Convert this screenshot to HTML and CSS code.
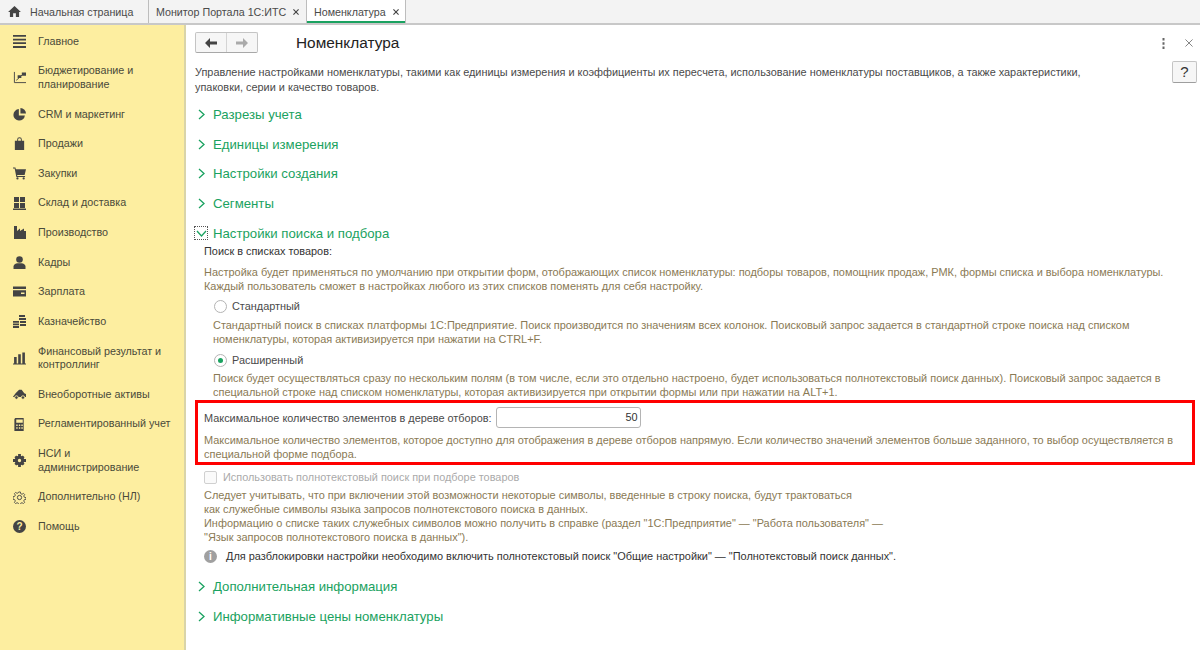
FILE: index.html
```html
<!DOCTYPE html>
<html lang="ru">
<head>
<meta charset="utf-8">
<title>Номенклатура</title>
<link rel="stylesheet" href="styles.css">
</head>
<body>
<header class="tabs">
  <div class="tab tab-home">
    <svg class="home-icon" viewBox="0 0 14 12"><path d="M7 0 0 6.500h2V12h3.500V8h3v4H12V6.500h2z"/></svg>
    <span>Начальная страница</span>
  </div>
  <div class="tab tab-monitor"><span>Монитор Портала 1С:ИТС</span><svg class="tab-x" viewBox="0 0 7 7"><path d="M.5.500l6 6M6.500.500l-6 6"/></svg></div>
  <div class="tab tab-active"><span>Номенклатура</span><svg class="tab-x" viewBox="0 0 7 7"><path d="M.5.500l6 6M6.500.500l-6 6"/></svg></div>
</header>
<div class="main">
  <nav class="side">
    <div class="nav-item"><svg class="ico" viewBox="0 0 12 12"><path d="M0 0h12v1.600H0zM0 3.400h12V5H0zM0 6.800h12v1.600H0zM0 10.200h12V12H0z"/></svg><span>Главное</span></div>
    <div class="nav-item two"><svg class="ico" viewBox="0 0 14 14"><path d="M1.500 1v11.500H14M3.500 10 7 7l3-3" fill="none" stroke="#444" stroke-width="1"/><path d="M5 4.500h4v3H5zM9.500 1.500H14v3.500H9.500z"/></svg><span>Бюджетирование и планирование</span></div>
    <div class="nav-item"><svg class="ico" viewBox="0 0 14 14"><path d="M6.300 1.200A6.200 6.200 0 1 0 12.800 8H6.300z"/><path d="M8 0a6 6 0 0 1 6 6H8z"/></svg><span>CRM и маркетинг</span></div>
    <div class="nav-item"><svg class="ico" viewBox="0 0 12 14"><path d="M1 4h2.500V2.800a2.500 2.500 0 0 1 5 0V4H11v10H1zM4.500 4h3V2.800a1.500 1.500 0 0 0-3 0z" fill-rule="evenodd"/></svg><span>Продажи</span></div>
    <div class="nav-item"><svg class="ico" viewBox="0 0 14 13"><path d="M0 0h2.600l.5 2H14l-1.500 6H4.400l.3 1.200H13v1H3.600L1.800 1H0z"/><circle cx="4.800" cy="11.800" r="1.200"/><circle cx="11.500" cy="11.800" r="1.200"/></svg><span>Закупки</span></div>
    <div class="nav-item"><svg class="ico" viewBox="0 0 13 13"><path d="M1 0h5v5H1zM7 0h5v5H7zM1 6h5v5H1zM7 6h5v5H7zM0 11.600h13V13H0z"/></svg><span>Склад и доставка</span></div>
    <div class="nav-item"><svg class="ico" viewBox="0 0 13 13"><path d="M1 0h3v5l3-2.500V5l4-2.500V5h2v8H1z"/></svg><span>Производство</span></div>
    <div class="nav-item"><svg class="ico" viewBox="0 0 12 13"><circle cx="6" cy="3.500" r="3.300"/><path d="M0 13v-2.500C0 8.500 2 7.500 4 7.200h4c2 .3 4 1.300 4 3.300V13z"/></svg><span>Кадры</span></div>
    <div class="nav-item"><svg class="ico" viewBox="0 0 13 10"><path d="M0 0h13v2.500H0zM0 3.700h13V10H0zM8 6v1.500h3.500V6z" fill-rule="evenodd"/></svg><span>Зарплата</span></div>
    <div class="nav-item"><svg class="ico" viewBox="0 0 13 13"><path d="M6 0h6v2H6zM6 3h7v2H6zM0 6h6v1.800H0zM7 6h6v2H7zM0 8.500h6v1.800H0zM7 9h6v2H7zM0 11h6v2H0z"/></svg><span>Казначейство</span></div>
    <div class="nav-item two"><svg class="ico" viewBox="0 0 12 11"><path d="M1 4h2.400v6H1zM4.800 1.500h2.400V10H4.800zM8.600 0H11v10H8.600zM0 10h12v1H0z"/></svg><span>Финансовый результат и контроллинг</span></div>
    <div class="nav-item"><svg class="ico" viewBox="0 0 15 11"><path d="M0 8 3 4l4-4h3l3 4 2 1v3.500H0z"/><circle cx="4" cy="9" r="2" stroke="#fdeea0"/><circle cx="11.500" cy="9" r="2" stroke="#fdeea0"/></svg><span>Внеоборотные активы</span></div>
    <div class="nav-item"><svg class="ico" viewBox="0 0 11 14"><path d="M1 0h9v14H0V1zM2 1.500V5h7V1.500zM2 7v1.500h1.500V7zM4.800 7v1.500h1.500V7zM7.500 7v1.500H9V7zM2 10v1.500h1.500V10zM4.800 10v1.500h1.500V10zM7.500 10v1.500H9V10z" fill-rule="evenodd"/></svg><span>Регламентированный учет</span></div>
    <div class="nav-item two"><svg class="ico" viewBox="0 0 14 14"><path d="M7 3.500a3.500 3.500 0 1 0 0 7 3.500 3.500 0 0 0 0-7z" fill="none" stroke="#444" stroke-width="3.400"/><path d="M5.500 0h3v3h-3zM5.500 11h3v3h-3zM0 5.500h3v3H0zM11 5.500h3v3h-3zM1.500 3.500l2-2 2 2-2 2zM8.500 3.500l2-2 2 2-2 2zM1.500 10.500l2-2 2 2-2 2zM8.500 10.500l2-2 2 2-2 2z"/></svg><span>НСИ и администрирование</span></div>
    <div class="nav-item"><svg class="ico" viewBox="0 0 14 14"><circle cx="7" cy="7" r="2.300" fill="none" stroke="#444" stroke-width="1"/><path d="M6 .5h2l.4 2 1.500.7 1.700-1.100 1.400 1.400-1.100 1.700.7 1.500 2 .4v2l-2 .4-.7 1.500 1.100 1.700-1.400 1.400-1.700-1.100-1.500.7-.4 2H6l-.4-2-1.500-.7-1.700 1.100-1.400-1.400 1.100-1.700-.7-1.500-2-.4V6l2-.4.700-1.500L1 2.400 2.400 1l1.700 1.100 1.500-.7z" transform="translate(.6 .6) scale(.92)" fill="none" stroke="#444" stroke-width="1"/></svg><span>Дополнительно (НЛ)</span></div>
    <div class="nav-item"><svg class="ico" viewBox="0 0 13 13"><circle cx="6.500" cy="6.500" r="6.500"/><text x="6.500" y="10.200" class="qmark">?</text></svg><span>Помощь</span></div>
  </nav>
  <main class="content">
    <div class="toolbar">
      <div class="nav-btns">
        <span class="nav-btn"><svg viewBox="0 0 12 10" class="arrow"><path d="M5 0v3.500h7v3H5V10L0 5z" fill="#444"/></svg></span>
        <span class="nav-btn"><svg viewBox="0 0 12 10" class="arrow"><path d="M7 0v3.500H0v3h7V10l5-5z" fill="#aaa"/></svg></span>
      </div>
      <h1>Номенклатура</h1>
      <div class="win-ctrl">
        <svg class="dots" viewBox="0 0 3 11"><path d="M.5 0h2v2.500h-2zM.5 4.200h2v2.500h-2zM.5 8.400h2V11h-2z" fill="#666"/></svg>
        <svg class="close" viewBox="0 0 9 9"><path d="M.5.500l8 8M8.500.500l-8 8" stroke="#777" fill="none"/></svg>
      </div>
    </div>
    <div class="desc-row">
      <p class="lead">Управление настройками номенклатуры, такими как единицы измерения и коэффициенты их пересчета, использование номенклатуры поставщиков, а также характеристики,<br>упаковки, серии и качество товаров.</p>
      <span class="help">?</span>
    </div>
    <div class="group"><svg class="chev" viewBox="0 0 7 11"><path d="M1 1l5 4.500L1 10" /></svg><span>Разрезы учета</span></div>
    <div class="group"><svg class="chev" viewBox="0 0 7 11"><path d="M1 1l5 4.500L1 10" /></svg><span>Единицы измерения</span></div>
    <div class="group"><svg class="chev" viewBox="0 0 7 11"><path d="M1 1l5 4.500L1 10" /></svg><span>Настройки создания</span></div>
    <div class="group"><svg class="chev" viewBox="0 0 7 11"><path d="M1 1l5 4.500L1 10" /></svg><span>Сегменты</span></div>
    <div class="group group-open"><span class="chev-box"><svg class="chev-down" viewBox="0 0 11 7"><path d="M1 1l4.500 5L10 1"/></svg></span><span>Настройки поиска и подбора</span></div>
    <section class="body">
      <p class="sub">Поиск в списках товаров:</p>
      <p class="note note-a">Настройка будет применяться по умолчанию при открытии форм, отображающих список номенклатуры: подборы товаров, помощник продаж, РМК, формы списка и выбора номенклатуры.<br>Каждый пользователь сможет в настройках любого из этих списков поменять для себя настройку.</p>
      <div class="radio-row first"><span class="radio"></span><span>Стандартный</span></div>
      <p class="note note-r">Стандартный поиск в списках платформы 1С:Предприятие. Поиск производится по значениям всех колонок. Поисковый запрос задается в стандартной строке поиска над списком<br>номенклатуры, которая активизируется при нажатии на CTRL+F.</p>
      <div class="radio-row"><span class="radio on"></span><span>Расширенный</span></div>
      <p class="note note-r">Поиск будет осуществляться сразу по нескольким полям (в том числе, если это отдельно настроено, будет использоваться полнотекстовый поиск данных). Поисковый запрос задается в<br>специальной строке над списком номенклатуры, которая активизируется при открытии формы или при нажатии на ALT+1.</p>
      <div class="highlight">
        <div class="field-row"><label>Максимальное количество элементов в дереве отборов:</label><span class="input">50</span></div>
        <p class="note">Максимальное количество элементов, которое доступно для отображения в дереве отборов напрямую. Если количество значений элементов больше заданного, то выбор осуществляется в<br>специальной форме подбора.</p>
      </div>
      <div class="check-row"><span class="checkbox"></span><span>Использовать полнотекстовый поиск при подборе товаров</span></div>
      <p class="note note-c">Следует учитывать, что при включении этой возможности некоторые символы, введенные в строку поиска, будут трактоваться<br>как служебные символы языка запросов полнотекстового поиска в данных.<br>Информацию о списке таких служебных символов можно получить в справке (раздел "1С:Предприятие" — "Работа пользователя" —<br>"Язык запросов полнотекстового поиска в данных").</p>
      <div class="info-row"><span class="info">i</span><span>Для разблокировки настройки необходимо включить полнотекстовый поиск "Общие настройки" — "Полнотекстовый поиск данных".</span></div>
    </section>
    <div class="group group-after"><svg class="chev" viewBox="0 0 7 11"><path d="M1 1l5 4.500L1 10" /></svg><span>Дополнительная информация</span></div>
    <div class="group"><svg class="chev" viewBox="0 0 7 11"><path d="M1 1l5 4.500L1 10" /></svg><span>Информативные цены номенклатуры</span></div>
  </main>
</div>
</body>
</html>
```
FILE: styles.css
```css
* { box-sizing: border-box; }
html, body { margin: 0; height: 100%; }
body {
  width: 1200px;
  height: 650px;
  overflow: hidden;
  background: #fff;
  color: #3c3c3c;
  font-family: "Liberation Sans", Arial, sans-serif;
  font-size: 10.900px;
  display: flex;
  flex-direction: column;
}
p { margin: 0; }

/* tabs */
.tabs {
  height: 25px;
  flex: none;
  display: flex;
  background: #f3f3f3;
  border-bottom: 2px solid #c8c8c8;
  font-size: 10.700px;
  color: #4a4a4a;
}
.tab {
  display: flex;
  align-items: center;
  height: 23px;
  border-right: 1px solid #bdbdbd;
  white-space: nowrap;
}
.tab-home { width: 149px; padding-left: 8px; gap: 9px; }
.home-icon { width: 13px; height: 11px; fill: #444; }
.tab-monitor { width: 158px; padding-left: 7px; }
.tab-active {
  width: 99px;
  padding-left: 7px;
  background: #fff;
  box-shadow: inset 0 -2px 0 #1aa260;
}
.tab-x { width: 6px; height: 6px; margin-left: 7px; stroke: #444; stroke-width: 1.300; fill: none; }

.main { flex: 1; display: flex; min-height: 0; }

/* sidebar */
.side {
  width: 186px;
  flex: none;
  background: #fdeea0;
  border-right: 2px solid #d9d4a8;
  padding-top: 1.600px;
  color: #4a4a3a;
  font-size: 10.750px;
}
.nav-item {
  display: flex;
  align-items: center;
  height: 29.600px;
  padding-left: 13px;
  line-height: 13.500px;
}
.nav-item.two { height: 43.400px; }
.nav-item span { margin-left: 12px; width: 135px; }
.nav-item .ico { width: 13px; height: 13px; flex: none; fill: #444; }
.qmark { fill: #fdeea0; font-size: 10px; font-weight: bold; text-anchor: middle; font-family: "Liberation Sans", sans-serif; }

/* content */
.content { flex: 1; padding-left: 9px; min-width: 0; position: relative; }
.toolbar { display: flex; align-items: center; height: 36px; }
.nav-btns {
  display: flex;
  width: 63px;
  height: 21px;
  margin-top: -1px;
  border: 1px solid #c4c4c4;
  border-bottom-color: #a8a8a8;
  border-radius: 2px;
  background: #f6f6f6;
}
.nav-btn { flex: 1; display: flex; align-items: center; justify-content: center; }
.nav-btn + .nav-btn { border-left: 1px solid #d4d4d4; }
.arrow { width: 12px; height: 10px; }
h1 {
  margin: 0 0 0 38px;
  font-size: 15.400px;
  font-weight: normal;
  color: #222;
  flex: 1;
}
.win-ctrl { display: flex; align-items: center; gap: 20px; padding-right: 7px; }
.dots { width: 3px; height: 11px; }
.close { width: 8px; height: 8px; }

.desc-row { display: flex; justify-content: space-between; height: 39px; }
.lead { padding-top: 4px; line-height: 14.500px; color: #4a4a4a; white-space: nowrap; }
.help {
  width: 25px;
  height: 22px;
  margin: 0 3px 0 0;
  border: 1px solid #c4c4c4;
  border-bottom-color: #9e9e9e;
  border-radius: 2px;
  background: #f6f6f6;
  text-align: center;
  font-size: 15px;
  line-height: 20px;
  color: #333;
}

.group {
  display: flex;
  align-items: center;
  height: 29.600px;
  color: #1aa260;
  font-size: 13.200px;
}
.chev { width: 7px; height: 11px; margin: 0 8px 0 3px; fill: none; stroke: #1aa260; stroke-width: 1.300; }
.chev-box {
  width: 14px;
  height: 14px;
  margin-right: 5px;
  margin-left: -1px;
  border: 1px dotted #555;
  display: flex;
  align-items: center;
  justify-content: center;
}
.chev-down { width: 11px; height: 7px; fill: none; stroke: #1aa260; stroke-width: 1.300; }
.group-open { height: 20px; margin-top: 5px; }

.body { padding-left: 9px; }
.sub { height: 17px; line-height: 14px; color: #333; margin-top: 1px; }
.note { color: #8a7a55; line-height: 14px; white-space: nowrap; font-size: 10.950px; }
.note-a { padding-top: 4px; }
.note-r { margin-left: 9px; }
.radio-row { display: flex; align-items: center; height: 20px; margin-left: 10px; color: #4a4a4a; gap: 5px; }
.radio-row.first { margin-top: 3px; margin-bottom: 2px; }
.radio-row:not(.first) { margin-top: 4px; margin-bottom: 1px; }
.radio { width: 13px; height: 13px; border: 1px solid #b4b4b4; border-radius: 50%; background: #fff; display: block; position: relative; }
.radio.on::after { content: ""; position: absolute; left: 3px; top: 3px; width: 5px; height: 5px; border-radius: 50%; background: #1aa260; }
.highlight {
  margin: 1px 0 0 -9px;
  width: 1000px;
  height: 65px;
  padding: 3px 0 0 6px;
  border: 3px solid #f00;
}
.field-row { display: flex; align-items: center; height: 23px; color: #4a4a4a; gap: 4px; }
.input {
  width: 145px;
  height: 21px;
  border: 1px solid #b4b4b4;
  border-radius: 3px;
  text-align: right;
  padding-right: 2px;
  line-height: 19px;
  color: #333;
}
.highlight .note { margin-top: 4px; }
.check-row { display: flex; align-items: center; height: 20px; margin-top: 2px; color: #aaa; gap: 6px; }
.checkbox { width: 13px; height: 13px; border: 1px solid #d0d0d0; border-radius: 2px; background: #fafafa; }
.note-c { margin-top: 1px; }
.info-row { display: flex; align-items: center; height: 20px; margin-top: 2px; color: #333; gap: 9px; font-size: 10.950px; }
.info { width: 13px; height: 13px; border-radius: 50%; background: #a0a0a0; color: #fff; font-size: 10px; font-weight: bold; text-align: center; line-height: 13px; }
.group-after { margin-top: 5px; height: 30px; }
```
